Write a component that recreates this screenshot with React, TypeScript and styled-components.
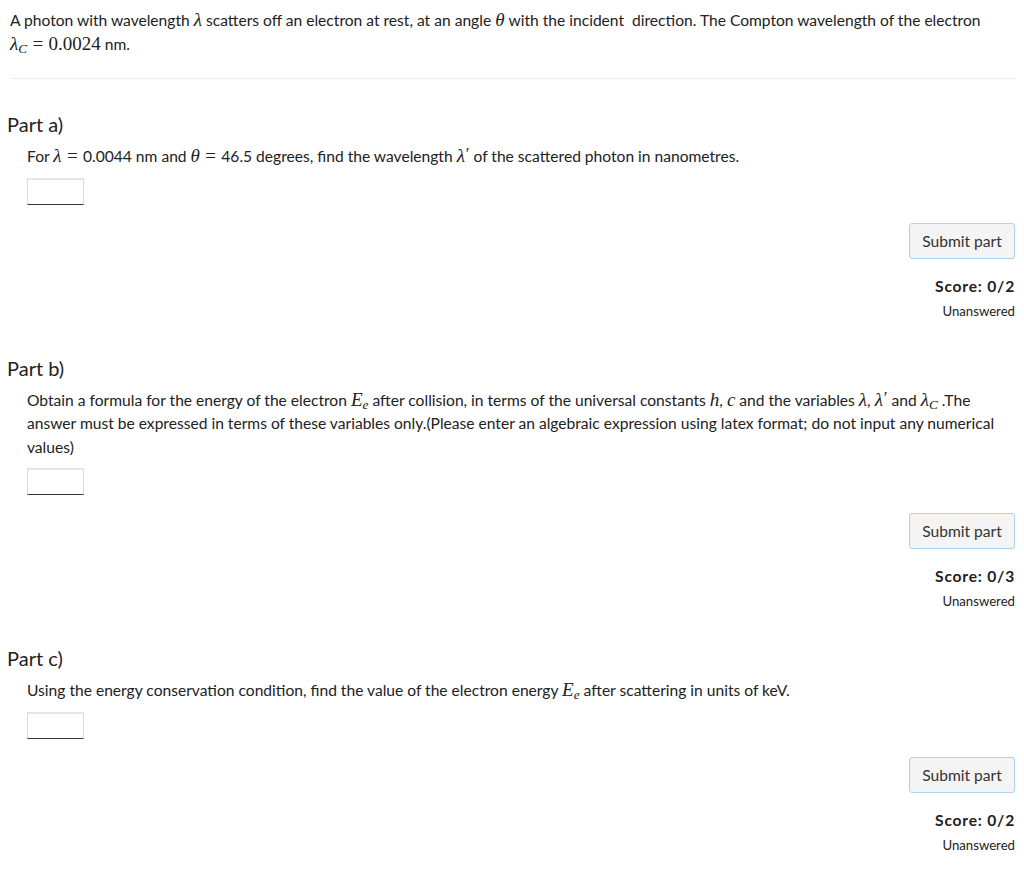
import React from "react";
import styled, { createGlobalStyle } from "styled-components";

const Global = createGlobalStyle`
  html, body { margin: 0; padding: 0; background: #fff; }
  body {
    font-family: Lato, "Noto Sans", "DejaVu Sans", sans-serif;
    color: #222;
    font-size: 15.6px;
  }
`;

const Page = styled.div`
  padding: 8px 9px 20px 10px;
`;

const Intro = styled.p`
  margin: 0;
  line-height: 24px;
`;

const Rule = styled.hr`
  border: none;
  border-top: 1px solid #ececec;
  margin: 22px 0 0 1px;
`;

const Part = styled.section<{ $first?: boolean }>`
  margin-top: ${(p) => (p.$first ? "33px" : "36px")};
`;

const PartTitle = styled.h3`
  margin: 0 0 0 -3px;
  font-size: 20px;
  font-weight: 400;
  line-height: 24px;
`;

const Body = styled.div`
  padding-left: 17px;
`;

const Question = styled.p`
  margin: 9px 0 0;
  line-height: 23.5px;
`;

const AnswerBox = styled.input`
  display: block;
  margin-top: 9px;
  width: 57px;
  height: 27px;
  box-sizing: border-box;
  border: 1px solid #dadada;
  border-top: 2px solid #e6e6e6;
  border-bottom: 1px solid #2f3a3a;
  background: #fff;
  padding: 0 4px;
`;

const Side = styled.div`
  display: flex;
  flex-direction: column;
  align-items: flex-end;
  margin-top: 18px;
`;

const SubmitButton = styled.button`
  height: 36px;
  width: 106px;
  box-sizing: border-box;
  border: 1px solid #a9d3f2;
  border-radius: 3px;
  background: #f4f4f4;
  color: #333;
  font-family: inherit;
  font-size: 15.6px;
  padding: 0;
`;

const Score = styled.div`
  margin-top: 16px;
  font-weight: 700;
  font-size: 15.6px;
  line-height: 22px;
  letter-spacing: 0.8px;
`;

const Status = styled.div`
  margin-top: 5px;
  font-size: 13.2px;
  line-height: 18px;
`;

const M = styled.span`
  font-family: "Liberation Serif", "DejaVu Serif", serif;
  font-style: italic;
  font-size: 1.22em;
  line-height: 0;
`;

const MR = styled.span`
  font-family: "Liberation Serif", "DejaVu Serif", serif;
  font-size: 1.22em;
  line-height: 0;
`;

const Rel = styled.span`
  font-family: "Liberation Serif", "DejaVu Serif", serif;
  font-size: 1.22em;
  line-height: 0;
  margin: 0 0.28em;
`;

const Sub = styled.sub`
  font-size: 0.7em;
  vertical-align: -0.25em;
  line-height: 0;
`;

const Prime = styled.span`
  font-style: normal;
  font-size: 0.9em;
  display: inline-block;
  transform: translateY(-0.15em);
  margin-left: 0.05em;
`;

type PartProps = {
  title: string;
  score: string;
  first?: boolean;
  children: React.ReactNode;
};

const PartBlock = ({ title, score, first, children }: PartProps) => (
  <Part $first={first}>
    <PartTitle>{title}</PartTitle>
    <Body>
      <Question>{children}</Question>
      <AnswerBox type="text" aria-label={title} />
      <Side>
        <SubmitButton>Submit part</SubmitButton>
        <Score>Score: {score}</Score>
        <Status>Unanswered</Status>
      </Side>
    </Body>
  </Part>
);

const Lambda = () => <M>λ</M>;
const LambdaPrime = () => (
  <M>
    λ<Prime>′</Prime>
  </M>
);
const LambdaC = () => (
  <M>
    λ<Sub>C</Sub>
  </M>
);
const Ee = () => (
  <M>
    E<Sub>e</Sub>
  </M>
);

export default function App() {
  return (
    <>
      <Global />
      <Page>
        <Intro>
          A photon with wavelength <Lambda /> scatters off an electron at rest, at an angle <M>θ</M> with the
          incident&nbsp; direction. The Compton wavelength of the electron
          <br />
          <LambdaC />
          <Rel>=</Rel>
          <MR>0.0024</MR> nm.
        </Intro>
        <Rule />
        <PartBlock title="Part a)" score="0/2" first>
          For <Lambda />
          <Rel>=</Rel>0.0044 nm and <M>θ</M>
          <Rel>=</Rel>46.5 degrees, find the wavelength <LambdaPrime />
          &nbsp;of the scattered photon in nanometres.
        </PartBlock>
        <PartBlock title="Part b)" score="0/3">
          Obtain a formula for the energy of the electron <Ee /> after collision, in terms of the universal
          constants <M>h</M>, <M>c</M> and the variables <Lambda />, <LambdaPrime />
          &nbsp;and <LambdaC /> .The answer must be expressed in terms of these variables only.(Please enter an
          algebraic expression using latex format; do not input any numerical values)
        </PartBlock>
        <PartBlock title="Part c)" score="0/2">
          Using the energy conservation condition, find the value of the electron energy <Ee />
          &nbsp;after scattering in units of keV.
        </PartBlock>
      </Page>
    </>
  );
}
